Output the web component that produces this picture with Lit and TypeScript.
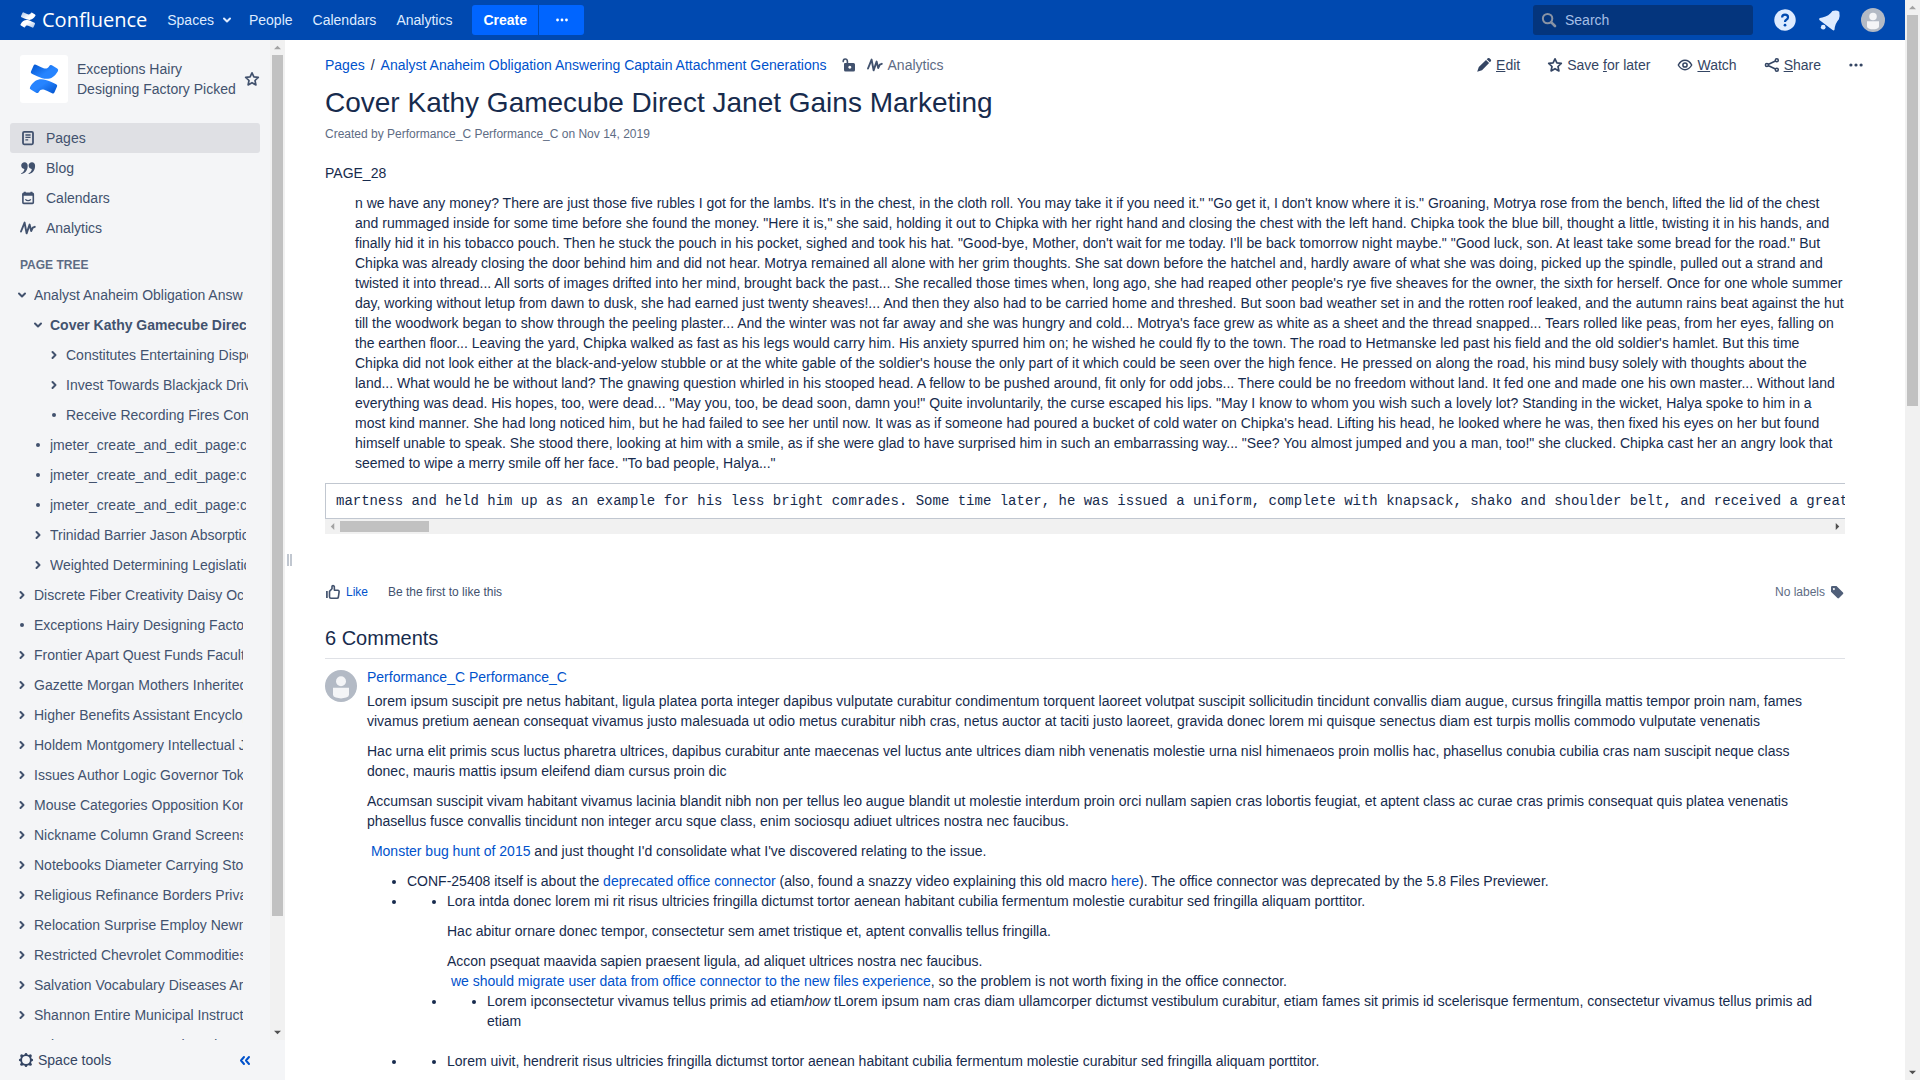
import { LitElement, html, css, svg } from "lit";
import { customElement, property } from "lit/decorators.js";

const ICONS: Record<string, unknown> = {
  page: svg`<rect x="3" y="1.9" width="10" height="12.4" rx="1.2" fill="none" stroke="currentColor" stroke-width="1.8"/><path d="M5.4 5h5.2M5.4 7.4h5.2M5.4 9.8h2.8" stroke="currentColor" stroke-width="1.3"/>`,
  quote: svg`<path d="M4.6 2.2c1.8 0 3.1 1.4 3.1 3.5 0 4.3-2.3 7.4-6 8.3-.6.1-.8-.5-.3-.8 1.8-1 2.9-2.5 3-4.3C2.7 9 1.2 7.6 1.2 5.6 1.2 3.6 2.7 2.2 4.600 2.200zM12 2.200c1.800 0 3.100 1.400 3.100 3.500 0 4.300-2.300 7.400-6 8.300-.6.1-.8-.5-.3-.8 1.800-1 2.900-2.500 3-4.300-1.700.1-3.200-1.300-3.200-3.300 0-2 1.500-3.400 3.400-3.400z" fill="currentColor"/>`,
  calendar: svg`<rect x="2.900" y="3.400" width="10.400" height="10" rx=".8" fill="none" stroke="currentColor" stroke-width="1.600"/><path d="M2.500 4.800h11.200M4.800 1.800v2M11.400 1.800v2" stroke="currentColor" stroke-width="2"/><path d="M5.400 9.400c1.400 1.700 4 1.700 5.400 0" fill="none" stroke="currentColor" stroke-width="1.300"/>`,
  analytics: svg`<path d="M1 11.500 4.600 2.600 6.600 13.400 9.600 4.600 11.200 11 12.800 7.600 14.800 6.800" fill="none" stroke="currentColor" stroke-width="1.900" stroke-linejoin="round" stroke-linecap="round"/>`,
  star: svg`<path d="M8 1.800 9.900 5.900 14.300 6.400 11 9.500 11.900 13.900 8 11.700 4.100 13.900 5 9.500 1.700 6.400 6.100 5.900z" fill="none" stroke="currentColor" stroke-width="1.700" stroke-linejoin="round"/>`,
  unlock: svg`<path d="M2.200 4.600Q2.200 2 4.200 2T6.400 4.200V6.400" fill="none" stroke="currentColor" stroke-width="1.600" stroke-linecap="round"/><path fill-rule="evenodd" d="M4 6h8.500q1.500 0 1.500 1.500v5.500q0 1.500-1.500 1.500H4.500Q3 14.500 3 13V7Q3 6 4 6zM8.800 8.800a1.500 1.500 0 1 0 .01 0z" fill="currentColor"/>`,
  pencil: svg`<path d="M10 2.900 13.100 6 6 13.200 1.200 14.800 2.800 10zM10.700 2.200l1.100-1q.9-.6 1.700.1l1.300 1.300q.7.800.1 1.700l-1.100 1z" fill="currentColor"/>`,
  eye: svg`<path d="M1.300 8C3 5 5.300 3.300 8 3.300S13 5 14.700 8C13 11 10.700 12.700 8 12.700S3 11 1.300 8z" fill="none" stroke="currentColor" stroke-width="1.500" stroke-linejoin="round"/><circle cx="8" cy="8" r="2.100" fill="none" stroke="currentColor" stroke-width="1.500"/>`,
  share: svg`<path d="M3 8 13 3.200M3 8l10 4.800" stroke="currentColor" stroke-width="1.500"/><g fill="#fff" stroke="currentColor" stroke-width="1.500"><circle cx="2.900" cy="8" r="1.500"/><circle cx="12.800" cy="3.200" r="1.500"/><circle cx="12.800" cy="12.800" r="1.500"/></g>`,
  more: svg`<g fill="currentColor"><circle cx="2.900" cy="8" r="1.600"/><circle cx="8" cy="8" r="1.600"/><circle cx="13.100" cy="8" r="1.600"/></g>`,
  down: svg`<path d="M5 6.500 8 9.500 11 6.500" fill="none" stroke="currentColor" stroke-width="2" stroke-linecap="round" stroke-linejoin="round"/>`,
  right: svg`<path d="M6.500 5 9.500 8 6.500 11" fill="none" stroke="currentColor" stroke-width="2" stroke-linecap="round" stroke-linejoin="round"/>`,
  dot: svg`<circle cx="8" cy="8" r="2" fill="currentColor"/>`,
  search: svg`<circle cx="6.600" cy="6.600" r="4.700" fill="none" stroke="currentColor" stroke-width="2"/><path d="M10.300 10.300 14 14" stroke="currentColor" stroke-width="2.600" stroke-linecap="round"/>`,
  like: svg`<path d="M1.900 7v7" stroke="currentColor" stroke-width="1.700"/><path d="M4.500 7.400 7 4.800V2.600q0-1 1-1t1.300 1L9.400 6.300h3.400q1.500 0 1.300 1.500L13.400 13q-.2 1.200-1.400 1.200H6q-1.500 0-1.500-1.500z" fill="none" stroke="currentColor" stroke-width="1.600" stroke-linejoin="round"/>`,
  tag: svg`<path fill-rule="evenodd" d="M2 3.200Q2 2 3.200 2H7.500L14 8.400q.8.800 0 1.600L10 14q-.8.800-1.600 0L2 7.700zM4.900 3.900a1 1 0 1 0 .01 0z" fill="currentColor"/>`,
  gear: svg`<circle cx="8" cy="8" r="4.900" fill="none" stroke="currentColor" stroke-width="1.900"/><g fill="currentColor"><circle cx="8" cy="2.200" r="1.300"/><circle cx="8" cy="13.800" r="1.300"/><circle cx="2.200" cy="8" r="1.300"/><circle cx="13.800" cy="8" r="1.300"/><circle cx="3.700" cy="3.700" r="1.500"/><circle cx="12.300" cy="3.700" r="1.500"/><circle cx="3.700" cy="12.300" r="1.500"/><circle cx="12.300" cy="12.300" r="1.500"/></g>`,
  collapse: svg`<path d="M7 5 4 8.500 7 12M12 5 9 8.500 12 12" fill="none" stroke="currentColor" stroke-width="2" stroke-linecap="round" stroke-linejoin="round"/>`,
  bell: svg`<path d="M3.200 6.200Q8 5.200 10.500 1.500q3-1 5 .5 .6 3-.3 5.500-2.800 3-3.200 7.500-.5 1-1.400.2L1 8Q.4 7 1.400 6.600z" fill="currentColor"/><circle cx="3.800" cy="13.200" r="1.700" fill="currentColor"/>`,
  help: svg`<circle cx="8" cy="8" r="7.800" fill="currentColor"/><path d="M5.900 6.200q0-2.100 2.100-2.100 2.200 0 2.200 1.900 0 1.100-1.200 1.800Q8 8.400 8 9.400" fill="none" stroke="#0049b0" stroke-width="1.600"/><circle cx="8" cy="11.800" r="1" fill="#0049b0"/>`,
  person: svg`<circle cx="8" cy="8" r="8" fill="#b3bac5"/><circle cx="8" cy="5.600" r="2.500" fill="#f4f5f7"/><path d="M4 8.900H12V12.400Q12 13.400 10.600 13.800Q8 14.600 5.400 13.800Q4 13.400 4 12.400z" fill="#f4f5f7"/>`,
};

@customElement("ui-icon")
class UiIcon extends LitElement {
  static styles = css`
    :host { display: inline-flex; flex: none; width: 16px; height: 16px; }
    svg { width: 100%; height: 100%; display: block; overflow: visible; }
  `;
  @property() name = "dot";
  render() {
    return html`<svg viewBox="0 0 16 16" aria-hidden="true">${ICONS[this.name]}</svg>`;
  }
}

@customElement("brand-mark")
class BrandMark extends LitElement {
  static styles = css`
    :host { display: inline-flex; flex: none; width: 16px; height: 16px; }
    svg { width: 100%; height: 100%; display: block; }
    .a { stop-color: var(--mark-dark, #0052cc); }
    .b { stop-color: var(--mark-light, #2684ff); }
  `;
  render() {
    return html`<svg viewBox="0 0 32 32" preserveAspectRatio="none" aria-hidden="true">
      <defs>
        <linearGradient id="lower" x1="1" y1="1" x2=".2" y2=".4"><stop class="a" offset="0"/><stop class="b" offset=".8"/></linearGradient>
        <linearGradient id="upper" x1="0" y1="0" x2=".8" y2=".6"><stop class="a" offset="0"/><stop class="b" offset=".8"/></linearGradient>
      </defs>
      <path fill="url(#lower)" d="M1.200 24.400 Q.2 26.100 1.900 27.200 L7.600 30.700 Q9.300 31.600 10.300 30 C12.600 26.200 14.900 26.700 19 28.600 L24.600 31.200 Q26.400 32 27.200 30.200 L29.900 24.100 Q30.600 22.500 29 21.700 L23.300 19 C13.500 14.300 6.500 15.200 1.200 24.400z"/>
      <path fill="url(#upper)" d="M30.800 7.600 Q31.800 5.900 30.100 4.800 L24.400 1.300 Q22.700 .4 21.700 2 C19.400 5.800 17.100 5.300 13 3.400 L7.400 .8 Q5.600 0 4.800 1.800 L2.100 7.900 Q1.400 9.500 3 10.300 L8.700 13 C18.500 17.700 25.500 16.800 30.800 7.600z"/>
    </svg>`;
  }
}

@customElement("scroll-track")
class ScrollTrack extends LitElement {
  static styles = css`
    :host { display: flex; flex: none; flex-direction: column; width: 15px; background: #f1f1f1; }
    :host([horizontal]) { flex-direction: row; width: auto; height: 15px; }
    .end { flex: none; display: flex; align-items: center; justify-content: center; width: 15px; height: 15px; color: #505050; }
    .start { color: #a3a3a3; }
    .lane { flex: 1; min-height: 0; min-width: 0; padding: 0 2px; }
    :host([horizontal]) .lane { padding: 2px 0; }
    .thumb { background: #c1c1c1; height: 100%; }
    svg { width: 7px; height: 7px; display: block; }
  `;
  @property({ type: Boolean, reflect: true }) horizontal = false;
  @property({ type: Number }) share = 50;
  render() {
    const h = this.horizontal;
    return html`
      <div class="end start"><svg viewBox="0 0 8 8"><path fill="currentColor" d=${h ? "M6 0v8L2 4z" : "M0 6h8L4 2z"}/></svg></div>
      <div class="lane"><div class="thumb" style=${h ? `width:${this.share}%` : `height:${this.share}%`}></div></div>
      <div class="end"><svg viewBox="0 0 8 8"><path fill="currentColor" d=${h ? "M2 0v8l4-4z" : "M0 2h8L4 6z"}/></svg></div>`;
  }
}

type TreeRow = [depth: number, marker: string, title: string];
const TREE: TreeRow[] = [
  [0, "down", "Analyst Anaheim Obligation Answering Captain"],
  [1, "down", "Cover Kathy Gamecube Direct Janet Gains"],
  [2, "right", "Constitutes Entertaining Dispose Factory"],
  [2, "right", "Invest Towards Blackjack Driving Factory"],
  [2, "dot", "Receive Recording Fires Con"],
  [1, "dot", "jmeter_create_and_edit_page:create"],
  [1, "dot", "jmeter_create_and_edit_page:create"],
  [1, "dot", "jmeter_create_and_edit_page:create"],
  [1, "right", "Trinidad Barrier Jason Absorption"],
  [1, "right", "Weighted Determining Legislation"],
  [0, "right", "Discrete Fiber Creativity Daisy Occasion"],
  [0, "dot", "Exceptions Hairy Designing Factory Picked"],
  [0, "right", "Frontier Apart Quest Funds Faculty"],
  [0, "right", "Gazette Morgan Mothers Inherited"],
  [0, "right", "Higher Benefits Assistant Encyclopedia"],
  [0, "right", "Holdem Montgomery Intellectual Janet"],
  [0, "right", "Issues Author Logic Governor Token"],
  [0, "right", "Mouse Categories Opposition Kong"],
  [0, "right", "Nickname Column Grand Screensaver"],
  [0, "right", "Notebooks Diameter Carrying Storage"],
  [0, "right", "Religious Refinance Borders Private"],
  [0, "right", "Relocation Surprise Employ Newman"],
  [0, "right", "Restricted Chevrolet Commodities"],
  [0, "right", "Salvation Vocabulary Diseases Armed"],
  [0, "right", "Shannon Entire Municipal Instructor"],
  [0, "right", "Solar Governor Serve Thread"],
];

@customElement("space-sidebar")
class SpaceSidebar extends LitElement {
  static styles = css`
    :host { display: flex; flex-direction: column; width: 285px; flex: none; background: #f4f5f7; color: #42526e; }
    a { color: inherit; text-decoration: none; }
    ul { list-style: none; margin: 0; padding: 0; }
    .body { flex: 1; min-height: 0; display: flex; }
    .scroll { flex: 1; min-width: 0; overflow: hidden; padding: 15px 10px 0; }
    .space { display: flex; align-items: center; padding-left: 10px; }
    .tile { display: flex; align-items: center; justify-content: center; width: 48px; height: 48px; border-radius: 3px; background: #fff; }
    .tile brand-mark { width: 30px; height: 30px; }
    .name { flex: 1; margin-left: 9px; line-height: 20px; }
    .plain { border: 0; background: none; padding: 0; margin: 0; color: inherit; font: inherit; display: flex; align-items: center; }
    .menu { padding-top: 20px; }
    .item { display: flex; align-items: center; gap: 10px; height: 30px; padding: 0 10px; border-radius: 3px; }
    .item.on { background: #dfe0e4; }
    h2 { margin: 0; padding: 11px 10px 4px; font-size: 12px; line-height: 22px; color: #5e6c84; font-weight: bold; }
    .row { display: flex; align-items: center; height: 30px; }
    .row.d1 { padding-left: 16px; margin-right: -3px; }
    .row.d2 { padding-left: 32px; margin-right: -5px; }
    .row a { flex: 1; min-width: 0; margin: 0 17px 0 4px; overflow: hidden; white-space: nowrap; line-height: 30px; }
    .row ui-icon { margin-left: 4px; }
    .row.current { font-weight: bold; }
    .foot { display: flex; justify-content: space-between; align-items: center; height: 40px; padding: 0 32px 0 18px; }
    .tools { gap: 4px; color: #344563; }
    .fold { color: #0052cc; }
  `;
  render() {
    const item = (icon: string, text: string, on = false) => html`
      <li><a href="#" class="item ${on ? "on" : ""}"><ui-icon name=${icon}></ui-icon>${text}</a></li>`;
    return html`
      <div class="body">
        <div class="scroll">
          <div class="space">
            <a href="#" class="tile" aria-label="Space home"><brand-mark></brand-mark></a>
            <a href="#" class="name">Exceptions Hairy Designing Factory Picked</a>
            <button class="plain" aria-label="Star this space"><ui-icon name="star"></ui-icon></button>
          </div>
          <ul class="menu">
            ${item("page", "Pages", true)}${item("quote", "Blog")}${item("calendar", "Calendars")}${item("analytics", "Analytics")}
          </ul>
          <h2>PAGE TREE</h2>
          <ul>
            ${TREE.map(([d, m, t], i) => html`
              <li class="row d${d} ${i === 1 ? "current" : ""}"><ui-icon name=${m}></ui-icon><a href="#">${t}</a></li>`)}
          </ul>
        </div>
        <scroll-track share="88.8"></scroll-track>
      </div>
      <div class="foot">
        <button class="plain tools"><ui-icon name="gear"></ui-icon>Space tools</button>
        <button class="plain fold" aria-label="Collapse sidebar"><ui-icon name="collapse"></ui-icon></button>
      </div>`;
  }
}

@customElement("top-bar")
class TopBar extends LitElement {
  static styles = css`
    :host { display: flex; align-items: center; height: 40px; flex: none; background: #0049b0; color: #deebff; padding: 0 20px; }
    a { color: inherit; text-decoration: none; }
    .logo { display: flex; align-items: center; gap: 6px; color: #fff; font: 20px/40px "Open Sans", sans-serif; }
    brand-mark { --mark-dark: #a9c3e8; --mark-light: #fff; }
    nav { display: flex; gap: 20px; margin: 0 20px; }
    nav a { display: flex; align-items: center; gap: 5px; }
    .caret { margin-right: -6px; }
    .create { display: flex; gap: 1px; }
    .create button { height: 30px; border: 0; background: #0065ff; color: #fff; font: bold 14px "Liberation Sans", sans-serif; padding: 0 11px; display: flex; align-items: center; justify-content: center; }
    .create .first { border-radius: 3px 0 0 3px; }
    .create .last { border-radius: 0 3px 3px 0; width: 45px; }
    .create ui-icon { width: 14px; height: 14px; }
    .grow { flex: 1; }
    .search { display: flex; align-items: center; gap: 8px; width: 220px; height: 30px; border-radius: 3px; background: #04357d; padding: 0 8px; box-sizing: border-box; color: #8993a4; }
    input { flex: 1; min-width: 0; border: 0; background: none; outline: 0; padding: 0; font: inherit; color: #b3cbef; }
    input::placeholder { color: #a5bfe6; opacity: 1; }
    .icons { display: flex; align-items: center; gap: 20px; margin-left: 20px; }
    .icons button { border: 0; background: none; padding: 0; color: #deebff; display: flex; width: 24px; height: 24px; align-items: center; justify-content: center; }
    .icons ui-icon { width: 22px; height: 22px; }
    .icons .me { width: 24px; height: 24px; }
  `;
  render() {
    return html`
      <a href="#" class="logo"><brand-mark></brand-mark>Confluence</a>
      <nav>
        <a href="#">Spaces <ui-icon class="caret" name="down"></ui-icon></a>
        <a href="#">People</a><a href="#">Calendars</a><a href="#">Analytics</a>
      </nav>
      <div class="create"><button class="first">Create</button><button class="last" aria-label="Create from template"><ui-icon name="more"></ui-icon></button></div>
      <div class="grow"></div>
      <label class="search"><ui-icon name="search"></ui-icon><input type="search" placeholder="Search" aria-label="Search" /></label>
      <div class="icons">
        <button aria-label="Help"><ui-icon name="help"></ui-icon></button>
        <button aria-label="Notifications"><ui-icon name="bell"></ui-icon></button>
        <button aria-label="Profile"><ui-icon class="me" name="person"></ui-icon></button>
      </div>`;
  }
}

const STORY = `n we have any money? There are just those five rubles I got for the lambs. It's in the chest, in the cloth roll. You may take it if you need it." "Go get it, I don't know where it is." Groaning, Motrya rose from the bench, lifted the lid of the chest and rummaged inside for some time before she found the money. "Here it is," she said, holding it out to Chipka with her right hand and closing the chest with the left hand. Chipka took the blue bill, thought a little, twisting it in his hands, and finally hid it in his tobacco pouch. Then he stuck the pouch in his pocket, sighed and took his hat. "Good-bye, Mother, don't wait for me today. I'll be back tomorrow night maybe." "Good luck, son. At least take some bread for the road." But Chipka was already closing the door behind him and did not hear. Motrya remained all alone with her grim thoughts. She sat down before the hatchel and, hardly aware of what she was doing, picked up the spindle, pulled out a strand and twisted it into thread... All sorts of images drifted into her mind, brought back the past... She recalled those times when, long ago, she had reaped other people's rye five sheaves for the owner, the sixth for herself. Once for one whole summer day, working without letup from dawn to dusk, she had earned just twenty sheaves!... And then they also had to be carried home and threshed. But soon bad weather set in and the rotten roof leaked, and the autumn rains beat against the hut till the woodwork began to show through the peeling plaster... And the winter was not far away and she was hungry and cold... Motrya's face grew as white as a sheet and the thread snapped... Tears rolled like peas, from her eyes, falling on the earthen floor... Leaving the yard, Chipka walked as fast as his legs would carry him. His anxiety spurred him on; he wished he could fly to the town. The road to Hetmanske led past his field and the old soldier's hamlet. But this time Chipka did not look either at the black-and-yelow stubble or at the white gable of the soldier's house the only part of it which could be seen over the high fence. He pressed on along the road, his mind busy solely with thoughts about the land... What would he be without land? The gnawing question whirled in his stooped head. A fellow to be pushed around, fit only for odd jobs... There could be no freedom without land. It fed one and made one his own master... Without land everything was dead. His hopes, too, were dead... "May you, too, be dead soon, damn you!" Quite involuntarily, the curse escaped his lips. "May I know to whom you wish such a lovely lot? Standing in the wicket, Halya spoke to him in a most kind manner. She had long noticed him, but he had failed to see her until now. It was as if someone had poured a bucket of cold water on Chipka's head. Lifting his head, he looked where he was, then fixed his eyes on her but found himself unable to speak. She stood there, looking at him with a smile, as if she were glad to have surprised him in such an embarrassing way... "See? You almost jumped and you a man, too!" she clucked. Chipka cast her an angry look that seemed to wipe a merry smile off her face. "To bad people, Halya..."`;

const SNIPPET = "martness and held him up as an example for his less bright comrades. Some time later, he was issued a uniform, complete with knapsack, shako and shoulder belt, and received a great deal";

@customElement("page-content")
class PageContent extends LitElement {
  static styles = css`
    :host { display: block; flex: 1; min-width: 0; overflow: hidden; padding: 15px 60px 0 40px; }
    a { color: #0052cc; text-decoration: none; }
    button { border: 0; background: none; padding: 0; margin: 0; font: inherit; color: inherit; display: flex; align-items: center; }
    .head { display: flex; justify-content: space-between; height: 20px; }
    .crumbs { display: flex; align-items: center; }
    .sep { margin: 0 6px; }
    .crumbs ui-icon { color: #42526e; }
    .crumbs .lock { margin-left: 14px; }
    .crumbs .stats { display: flex; align-items: center; gap: 5px; margin-left: 10px; color: #5e6c84; }
    .actions { display: flex; align-items: center; gap: 27px; color: #344563; padding-right: 1px; }
    .actions button { gap: 4px; }
    .actions .more { margin-right: -20px; }
    h1 { margin: 12px 0 0; font-size: 28px; line-height: 32px; font-weight: 400; color: #172b4d; }
    p { margin: 10px 0 0; }
    .meta { margin: 5px 0 0; font-size: 12px; line-height: 20px; color: #5e6c84; }
    .lead { margin-top: 19px; }
    blockquote { margin: 10px 0 0 30px; }
    .code { margin: 10px 0 0; height: 34px; line-height: 35px; border: 1px solid #c1c7d0; border-right: 0; padding-left: 10px; overflow: hidden; white-space: pre; font-family: "Liberation Mono", monospace; }
    .social { display: flex; align-items: center; height: 20px; margin-top: 48px; font-size: 12px; color: #42526e; }
    .social button { color: #0052cc; gap: 5px; }
    .social button ui-icon { color: #42526e; }
    .social .first { flex: 1; margin-left: 20px; }
    .labels { display: flex; align-items: center; gap: 4px; color: #5e6c84; }
    .labels ui-icon { color: #505f79; }
    h2 { margin: 24px 0 0; padding-bottom: 8px; border-bottom: 1px solid #dfe1e6; font-size: 20px; line-height: 24px; font-weight: 400; color: #172b4d; }
    .comment { display: flex; gap: 10px; margin-top: 8px; padding-right: 10px; }
    .face { width: 32px; height: 32px; margin-top: 3px; }
    .text { flex: 1; min-width: 0; }
    .text .open { margin-top: 4px; }
    ul { margin: 10px 0 0; padding-left: 40px; list-style: disc; }
    li ul { margin-top: 0; }
    .spaced { padding-bottom: 20px; }
  `;
  render() {
    return html`
      <div class="head">
        <div class="crumbs">
          <a href="#">Pages</a><span class="sep">/</span><a href="#">Analyst Anaheim Obligation Answering Captain Attachment Generations</a>
          <button class="lock" aria-label="Unrestricted"><ui-icon name="unlock"></ui-icon></button>
          <a href="#" class="stats"><ui-icon name="analytics"></ui-icon>Analytics</a>
        </div>
        <div class="actions">
          <button><ui-icon name="pencil"></ui-icon><span><u>E</u>dit</span></button>
          <button><ui-icon name="star"></ui-icon><span>Save <u>f</u>or later</span></button>
          <button><ui-icon name="eye"></ui-icon><span><u>W</u>atch</span></button>
          <button><ui-icon name="share"></ui-icon><span><u>S</u>hare</span></button>
          <button class="more" aria-label="More actions"><ui-icon name="more"></ui-icon></button>
        </div>
      </div>
      <h1>Cover Kathy Gamecube Direct Janet Gains Marketing</h1>
      <p class="meta">Created by Performance_C Performance_C on Nov 14, 2019</p>
      <p class="lead">PAGE_28</p>
      <blockquote>${STORY}</blockquote>
      <div class="code">${SNIPPET}</div>
      <scroll-track horizontal share="6"></scroll-track>
      <div class="social">
        <button><ui-icon name="like"></ui-icon>Like</button>
        <span class="first">Be the first to like this</span>
        <span class="labels">No labels <ui-icon name="tag"></ui-icon></span>
      </div>
      <h2>6 Comments</h2>
      <div class="comment">
        <ui-icon class="face" name="person"></ui-icon>
        <div class="text">
          <a href="#">Performance_C Performance_C</a>
          <p class="open">Lorem ipsum suscipit pre netus habitant, ligula platea porta integer dapibus vulputate curabitur condimentum torquent laoreet volutpat suscipit sollicitudin tincidunt convallis diam augue, cursus fringilla mattis tempor proin nam, fames vivamus pretium aenean consequat vivamus justo malesuada ut odio metus curabitur nibh cras, netus auctor at taciti justo laoreet, gravida donec lorem mi quisque senectus diam est turpis mollis commodo vulputate venenatis</p>
          <p>Hac urna elit primis scus luctus pharetra ultrices, dapibus curabitur ante maecenas vel luctus ante ultrices diam nibh venenatis molestie urna nisl himenaeos proin mollis hac, phasellus conubia cubilia cras nam suscipit neque class donec, mauris mattis ipsum eleifend diam cursus proin dic</p>
          <p>Accumsan suscipit vivam habitant vivamus lacinia blandit nibh non per tellus leo augue blandit ut molestie interdum proin orci nullam sapien cras lobortis feugiat, et aptent class ac curae cras primis consequat quis platea venenatis phasellus fusce convallis tincidunt non integer arcu sque class, enim sociosqu adiuet ultrices nostra nec faucibus.</p>
          <p>&nbsp;<a href="#">Monster bug hunt of 2015</a> and just thought I'd consolidate what I've discovered relating to the issue.</p>
          <ul>
            <li>CONF-25408 itself is about the <a href="#">deprecated office connector</a> (also, found a snazzy video explaining this old macro <a href="#">here</a>). The office connector was deprecated by the 5.8 Files Previewer.</li>
            <li><ul>
              <li>Lora intda donec lorem mi rit risus ultricies fringilla dictumst tortor aenean habitant cubilia fermentum molestie curabitur sed fringilla aliquam porttitor.
                <p>Hac abitur ornare donec tempor, consectetur sem amet tristique et, aptent convallis tellus fringilla.</p>
                <p>Accon psequat maavida sapien praesent ligula, ad aliquet ultrices nostra nec faucibus.<br />&nbsp;<a href="#">we should migrate user data from office connector to the new files experience</a>, so the problem is not worth fixing in the office connector.</p>
              </li>
              <li><ul><li class="spaced">Lorem ipconsectetur vivamus tellus primis ad etiam<em>how</em> tLorem ipsum nam cras diam ullamcorper dictumst vestibulum curabitur, etiam fames sit primis id scelerisque fermentum, consectetur vivamus tellus primis ad etiam</li></ul></li>
            </ul></li>
            <li><ul><li>Lorem uivit, hendrerit risus ultricies fringilla dictumst tortor aenean habitant cubilia fermentum molestie curabitur sed fringilla aliquam porttitor.</li></ul></li>
          </ul>
        </div>
      </div>`;
  }
}

@customElement("app-root")
class AppRoot extends LitElement {
  static styles = css`
    :host { display: flex; height: 100vh; background: #fff; color: #172b4d; font: 14px/20px "Liberation Sans", Arial, sans-serif; }
    .frame { flex: 1; min-width: 0; display: flex; flex-direction: column; }
    .main { flex: 1; min-height: 0; display: flex; }
    .grip { flex: none; width: 5px; box-sizing: border-box; height: 12px; margin: auto -7px auto 2px; border: solid #c1c7d0; border-width: 0 2px; }
  `;
  render() {
    return html`
      <div class="frame">
        <top-bar></top-bar>
        <div class="main">
          <space-sidebar></space-sidebar>
          <div class="grip"></div>
          <page-content></page-content>
        </div>
      </div>
      <scroll-track share="37.2"></scroll-track>`;
  }
}
